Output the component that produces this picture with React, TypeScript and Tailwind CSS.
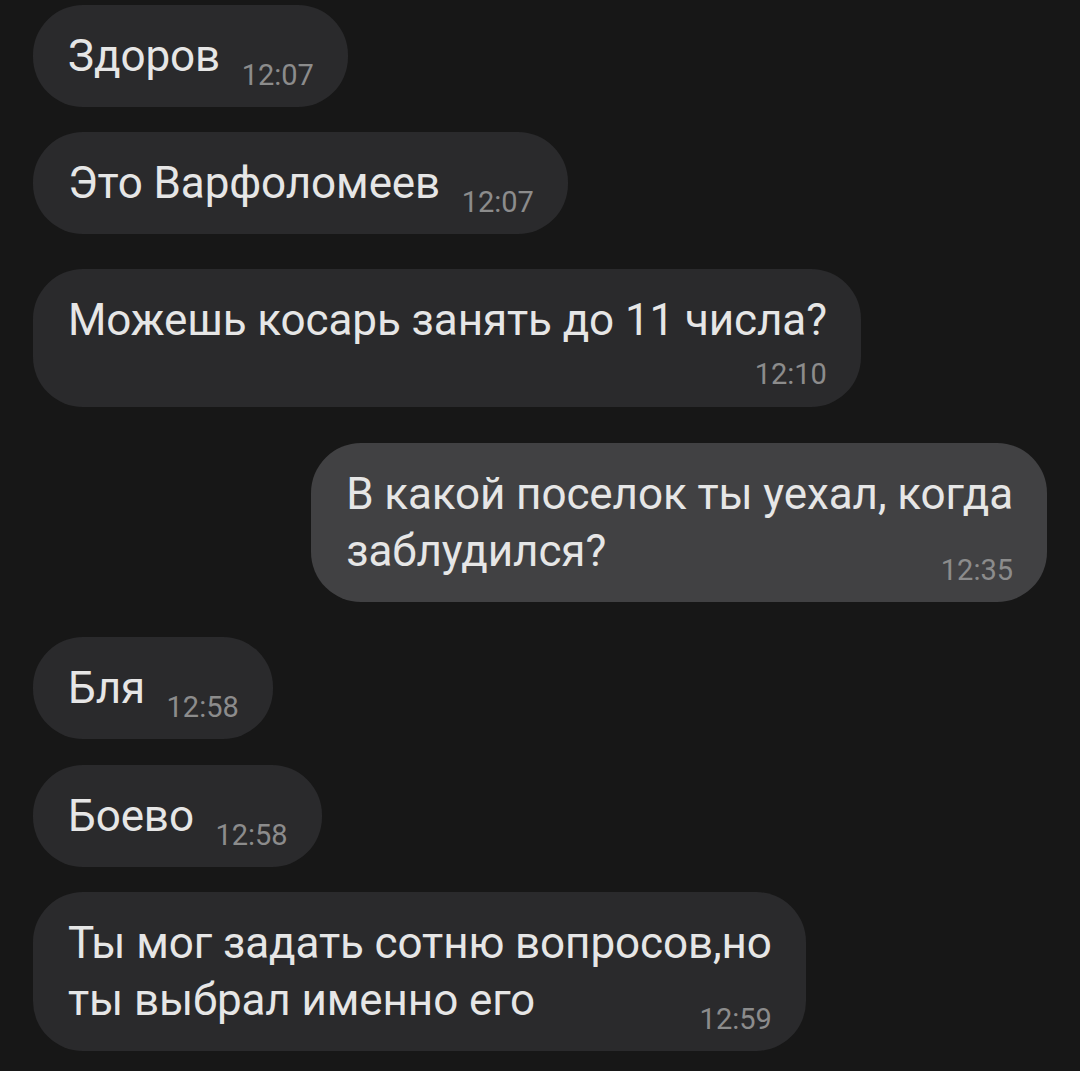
import clsx from "clsx";

type Message = {
  lines: string[];
  time: string;
  outgoing?: boolean;
  timeBelow?: boolean;
  gap: string;
};

const messages: Message[] = [
  { lines: ["Здоров"], time: "12:07", gap: "mt-0" },
  { lines: ["Это Варфоломеев"], time: "12:07", gap: "mt-[25px]" },
  {
    lines: ["Можешь косарь занять до 11 числа?"],
    time: "12:10",
    timeBelow: true,
    gap: "mt-[35px]",
  },
  {
    lines: ["В какой поселок ты уехал, когда", "заблудился?"],
    time: "12:35",
    outgoing: true,
    gap: "mt-[36px]",
  },
  { lines: ["Бля"], time: "12:58", gap: "mt-[35px]" },
  { lines: ["Боево"], time: "12:58", gap: "mt-[26px]" },
  {
    lines: ["Ты мог задать сотню вопросов,но", "ты выбрал именно его"],
    time: "12:59",
    gap: "mt-[25px]",
  },
];

function MessageText({ lines }: { lines: string[] }) {
  return (
    <>
      {lines.map((line, i) => (
        <span key={i}>
          {i > 0 && <br />}
          {line}
        </span>
      ))}
    </>
  );
}

function Bubble({ msg }: { msg: Message }) {
  return (
    <div
      className={clsx(
        "rounded-[50px] pt-[23px] pb-[22px] pl-[35px] pr-[34px]",
        msg.outgoing ? "self-end bg-[#414143]" : "self-start bg-[#2a2a2c]",
        msg.gap,
      )}
    >
      {msg.timeBelow ? (
        <div className="flex flex-col items-end">
          <p className="text-[44px] leading-[57px] tracking-[-0.1px] whitespace-nowrap text-[#e6e6e6]">
            <MessageText lines={msg.lines} />
          </p>
          <span className="mt-[10px] -mb-[4px] text-[29px] leading-[30px] text-[#8c8c8c]">
            {msg.time}
          </span>
        </div>
      ) : (
        <div className="grid">
          <p className="col-start-1 row-start-1 text-[44px] leading-[57px] tracking-[-0.1px] whitespace-nowrap text-[#e6e6e6]">
            <MessageText lines={msg.lines} />
            <span className="invisible ml-[22px] text-[29px] leading-[30px]">
              {msg.time}
            </span>
          </p>
          <span className="col-start-1 row-start-1 -mb-[5px] self-end justify-self-end text-[29px] leading-[30px] text-[#8c8c8c]">
            {msg.time}
          </span>
        </div>
      )}
    </div>
  );
}

export default function App() {
  return (
    <div className="flex min-h-[1071px] w-full flex-col bg-[#171717] px-[33px] pt-[5px] font-['Roboto',sans-serif]">
      {messages.map((msg, i) => (
        <Bubble key={i} msg={msg} />
      ))}
    </div>
  );
}
